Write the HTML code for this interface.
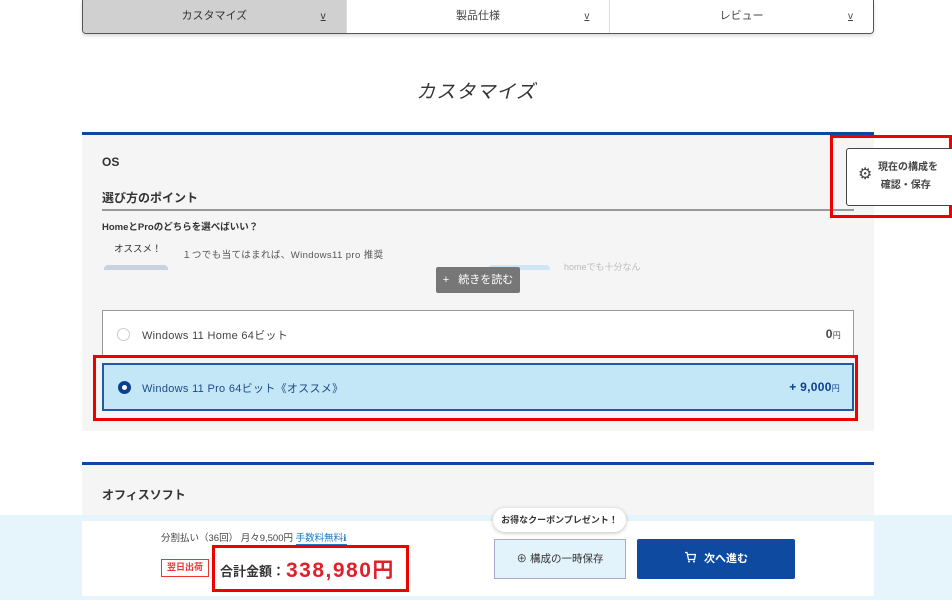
<!DOCTYPE html>
<html><head><meta charset="utf-8"><style>
*{box-sizing:border-box;margin:0;padding:0}
body{width:952px;height:600px;overflow:hidden;background:#fff;position:relative;font-family:"Liberation Sans","Noto Sans CJK JP",sans-serif;color:#333}
.abs{position:absolute}
.tabs{left:82px;top:0;width:792px;height:34px;border:1px solid #555;border-top:none;border-radius:0 0 4px 4px;display:flex;overflow:hidden;box-shadow:0 2px 3px rgba(0,0,0,.15)}
.tab{flex:1;position:relative;font-size:11px;color:#444;text-align:center;line-height:33px;border-right:1px solid #ddd;background:#fff}
.tab:last-child{border-right:none}
.tab .ar{position:absolute;right:20px;top:0;font-size:10px;text-decoration:underline}
.panel{background:#f5f5f5;border-top:3px solid #0d47a1}
.opt{background:#fff;border:1px solid #999;font-size:11px;color:#444;letter-spacing:.3px}
.radio{position:absolute;left:14px;width:13px;height:13px;border-radius:50%;border:1px solid #ccc;background:#fff}
</style></head><body>
<div class="abs tabs">
<div class="tab" style="background:#d0d0d0;color:#333">カスタマイズ<span class="ar">v</span></div>
<div class="tab">製品仕様<span class="ar">v</span></div>
<div class="tab">レビュー<span class="ar">v</span></div>
</div>
<div class="abs" style="left:0;width:952px;top:77px;text-align:center;font-size:19px;font-style:italic;color:#333;letter-spacing:1px">カスタマイズ</div>

<div class="abs panel" style="left:82px;top:132px;width:792px;height:299px"></div>
<div class="abs" style="left:102px;top:155px;font-size:12px;font-weight:bold">OS</div>
<div class="abs" style="left:102px;top:189px;font-size:12px;font-weight:bold">選び方のポイント</div>
<div class="abs" style="left:102px;top:209px;width:752px;height:2px;background:#999"></div>
<div class="abs" style="left:102px;top:219px;font-size:9.5px;font-weight:bold">HomeとProのどちらを選べばいい？</div>
<div class="abs" style="left:114px;top:241px;font-size:9.5px">オススメ！</div>
<div class="abs" style="left:182px;top:247px;font-size:9.5px;color:#555;letter-spacing:.4px">１つでも当てはまれば、Windows11 pro 推奨</div>
<div class="abs" style="left:104px;top:265px;width:64px;height:5px;background:#c9d3df;border-radius:4px 4px 0 0"></div>
<div class="abs" style="left:488px;top:265px;width:62px;height:5px;background:#cfe6f6;border-radius:4px 4px 0 0"></div>
<div class="abs" style="left:564px;top:260px;font-size:9px;color:#bbb">homeでも十分なん</div>
<div class="abs" style="left:436px;top:267px;width:84px;height:26px;background:#777;border-radius:2px;color:#fff;font-size:11px;line-height:26px;text-align:center">+&nbsp;&nbsp;&nbsp;続きを読む</div>

<div class="abs opt" style="left:102px;top:310px;width:752px;height:47px"><div class="radio" style="top:17px"></div><span class="abs" style="left:39px;top:16px">Windows 11 Home 64ビット</span><span class="abs" style="right:12px;top:16px;font-weight:bold;font-size:12px">0<span style="font-size:8px;font-weight:normal">円</span></span></div>
<div class="abs" style="left:93px;top:355px;width:765px;height:66px;border:3px solid #e00"></div>
<div class="abs opt" style="left:102px;top:363px;width:752px;height:48px;background:#c3e7f7;border:2px solid #1e5aa8;color:#1e4a8a"><div class="radio" style="top:16px;border:4px solid #0d3f8f;background:#fff"></div><span class="abs" style="left:38px;top:15px">Windows 11 Pro 64ビット《オススメ》</span><span class="abs" style="right:12px;top:15px;font-weight:bold;font-size:12px;color:#0d3f8f">+ 9,000<span style="font-size:8px;font-weight:normal">円</span></span></div>

<div class="abs" style="left:830px;top:135px;width:122px;height:83px;border:3px solid #e00"></div>
<div class="abs" style="left:846px;top:148px;width:110px;height:58px;background:#fff;border:1px solid #444;border-radius:3px;font-size:10px;font-weight:bold;color:#444;line-height:18px;padding:10px 0 0 31px">現在の構成を<br>&nbsp;確認・保存<span class="abs" style="left:11px;top:17px;font-size:16px;font-weight:normal">⚙</span></div>

<div class="abs panel" style="left:82px;top:462px;width:792px;height:60px"></div>
<div class="abs" style="left:102px;top:486px;font-size:12px;font-weight:bold">オフィスソフト</div>

<div class="abs" style="left:0;top:515px;width:952px;height:85px;background:#e6f4fb"></div>
<div class="abs" style="left:82px;top:521px;width:792px;height:75px;background:#fff"></div>
<div class="abs" style="left:161px;top:530px;font-size:9.5px;color:#444">分割払い（36回） 月々9,500円 <span style="color:#1a7bc6;border-bottom:1px solid #1a7bc6">手数料無料<span style="font-size:9px">ℹ</span></span></div>
<div class="abs" style="left:161px;top:559px;width:48px;height:18px;border:1.5px solid #e33;color:#e33;font-size:9px;font-weight:bold;text-align:center;line-height:15px">翌日出荷</div>
<div class="abs" style="left:212px;top:545px;width:197px;height:47px;border:3px solid #e00"></div>
<div class="abs" style="left:220px;top:561px;font-size:13px;font-weight:bold;color:#333">合計金額：</div>
<div class="abs" style="left:286px;top:554px;font-size:21px;font-weight:bold;color:#e0202a;letter-spacing:1.5px">338,980円</div>
<div class="abs" style="left:493px;top:508px;width:133px;height:24px;background:#fff;border-radius:12px;box-shadow:0 1px 4px rgba(0,0,0,.25);font-size:9px;font-weight:bold;text-align:center;line-height:24px">お得なクーポンプレゼント！</div>
<div class="abs" style="left:494px;top:539px;width:132px;height:40px;background:#e3f3fb;border:1px solid #aac;font-size:10.5px;text-align:center;line-height:38px;color:#333">⊕ 構成の一時保存</div>
<div class="abs" style="left:637px;top:539px;width:158px;height:40px;background:#0d4aa0;border-radius:2px;color:#fff;font-size:11px;font-weight:bold;text-align:center;line-height:40px"><svg width="12" height="12" viewBox="0 0 12 12" style="vertical-align:-1px;margin-right:8px"><path d="M1 1.5h2l1.5 7h6l1-5H4" fill="none" stroke="#fff" stroke-width="1.3"/><circle cx="5" cy="10.5" r="1" fill="#fff"/><circle cx="10" cy="10.5" r="1" fill="#fff"/></svg>次へ進む</div>
</body></html>
